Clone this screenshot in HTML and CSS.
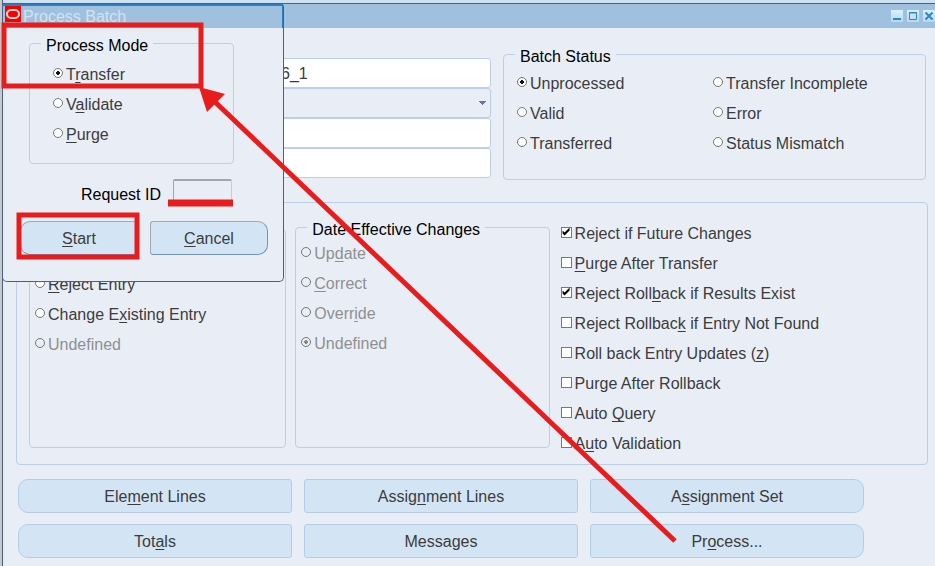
FILE: index.html
```html
<!DOCTYPE html>
<html lang="en">
<head>
    <meta charset="UTF-8">
    <meta name="viewport" content="width=device-width, initial-scale=1.0">
    <title>Process Batch</title>
    <link rel="stylesheet" href="styles.css">
</head>
<body>
    <!-- Batch window -->
    <main class="window">
        <header class="title-bar">
            <button class="window-button" aria-label="Minimize">
                <svg width="12" height="12"><path d="M2 9h8" stroke="#2f86c6" stroke-width="2"/></svg>
            </button>
            <button class="window-button" aria-label="Maximize">
                <svg width="12" height="12"><path d="M2.500 2.500h7v7h-7zM2 3h8" fill="none" stroke="#2f86c6"/></svg>
            </button>
            <button class="window-button" aria-label="Close">
                <svg width="12" height="12"><path d="M2.500 2.500l7 7M9.500 2.500l-7 7" stroke="#2f86c6" stroke-width="2"/></svg>
            </button>
        </header>

        <div class="top-row">
            <div class="fields">
                <input type="text" class="field" value="6_1" aria-label="Batch name">
                <select class="field field-select" aria-label="Batch type"><option></option></select>
                <input type="text" class="field" aria-label="Reference">
                <input type="text" class="field" aria-label="Source">
            </div>

            <fieldset class="group status">
                <legend>Batch Status</legend>
                <div class="status-options">
                    <label class="option"><input type="radio" name="status" checked>Unprocessed</label>
                    <label class="option"><input type="radio" name="status">Transfer Incomplete</label>
                    <label class="option"><input type="radio" name="status">Valid</label>
                    <label class="option"><input type="radio" name="status">Error</label>
                    <label class="option"><input type="radio" name="status">Transferred</label>
                    <label class="option"><input type="radio" name="status">Status Mismatch</label>
                </div>
            </fieldset>
        </div>

        <section class="actions">
            <fieldset class="group existing">
                <label class="option"><input type="radio" name="existing"><span><u>R</u>eject Entry</span></label>
                <label class="option"><input type="radio" name="existing"><span>Change E<u>x</u>isting Entry</span></label>
                <label class="option disabled"><input type="radio" name="existing" disabled>Undefined</label>
            </fieldset>

            <fieldset class="group changes">
                <legend>Date Effective Changes</legend>
                <label class="option disabled"><input type="radio" name="changes" disabled><span>Up<u>d</u>ate</span></label>
                <label class="option disabled"><input type="radio" name="changes" disabled><span><u>C</u>orrect</span></label>
                <label class="option disabled"><input type="radio" name="changes" disabled><span>Overr<u>i</u>de</span></label>
                <label class="option disabled"><input type="radio" name="changes" disabled checked>Undefined</label>
            </fieldset>

            <div class="checks">
                <label class="option"><input type="checkbox" checked>Reject if Future Changes</label>
                <label class="option"><input type="checkbox"><span><u>P</u>urge After Transfer</span></label>
                <label class="option"><input type="checkbox" checked><span>Reject Roll<u>b</u>ack if Results Exist</span></label>
                <label class="option"><input type="checkbox"><span>Reject Rollbac<u>k</u> if Entry Not Found</span></label>
                <label class="option"><input type="checkbox"><span>Roll back Entry Updates (<u>z</u>)</span></label>
                <label class="option"><input type="checkbox">Purge After Rollback</label>
                <label class="option"><input type="checkbox"><span>Auto <u>Q</u>uery</span></label>
                <label class="option"><input type="checkbox"><span>A<u>u</u>to Validation</span></label>
            </div>
        </section>

        <nav class="button-grid">
            <button class="button first">Ele<u>m</u>ent Lines</button>
            <button class="button">Assig<u>n</u>ment Lines</button>
            <button class="button last">A<u>s</u>signment Set</button>
            <button class="button first">Tot<u>a</u>ls</button>
            <button class="button">Messages</button>
            <button class="button last">Pr<u>o</u>cess...</button>
        </nav>
    </main>

    <!-- Process dialog -->
    <div class="dialog" role="dialog" aria-labelledby="dialogTitle">
        <div class="dialog-title">
            <svg class="logo" width="16" height="16">
                <rect width="16" height="16" fill="#f80000"/>
                <rect x="2" y="4" width="12" height="8" rx="4" fill="none" stroke="#ffd9d4" stroke-width="2"/>
            </svg>
            <span id="dialogTitle">Process Batch</span>
        </div>
        <fieldset class="group mode">
            <legend>Process Mode</legend>
            <label class="option"><input type="radio" name="mode" checked><span>T<u>r</u>ansfer</span></label>
            <label class="option"><input type="radio" name="mode"><span>V<u>a</u>lidate</span></label>
            <label class="option"><input type="radio" name="mode"><span><u>P</u>urge</span></label>
        </fieldset>
        <div class="request">
            <label for="requestId">Request ID</label>
            <input type="text" id="requestId" readonly>
        </div>
        <div class="dialog-buttons">
            <button class="button first"><u>S</u>tart</button>
            <button class="button last"><u>C</u>ancel</button>
        </div>
    </div>

    <!-- Red markers -->
    <svg class="markers" width="935" height="566" aria-hidden="true">
        <g fill="none" stroke="#e81c1c">
            <rect x="4" y="25" width="197" height="61" stroke-width="5"/>
            <rect x="19" y="215" width="118" height="42" stroke-width="5"/>
            <path d="M168 203h65" stroke-width="7"/>
            <path d="M213 100L675 541" stroke-width="5"/>
        </g>
        <path d="M199 87L225 94L207 112z" fill="#e81c1c"/>
    </svg>
</body>
</html>
```

FILE: styles.css
```css
* {
    margin: 0;
    padding: 0;
    box-sizing: border-box;
}

body {
    min-height: 100vh;
    background: #e9eef6;
    color: #3c3c3c;
    font-family: "Liberation Sans", Arial, sans-serif;
    font-size: 16px;
    line-height: 18px;
    overflow: hidden;
}

button,
input,
select {
    font: inherit;
    color: inherit;
}

u {
    text-underline-offset: 2px;
    text-decoration-skip-ink: none;
    text-decoration-thickness: 1px;
}

/* Batch window */
.window {
    min-height: 100vh;
    border-left: 1px solid #45618a;
    box-shadow: -2px 0 #c9c9c9;
    margin-left: 2px;
}

.title-bar {
    height: 28px;
    display: flex;
    justify-content: flex-end;
    gap: 4px;
    padding-top: 7px;
    border-top: 3px solid #cfe2f3;
    background: #9fc1df;
    box-shadow: inset 0 1px #45618a;
}

.window-button {
    width: 12px;
    height: 12px;
    border: none;
    background: linear-gradient(#d9f0fc, #b5d9f0);
}

.window-button svg {
    display: block;
}

.top-row {
    display: grid;
    grid-template-columns: 475fr 423fr;
    gap: 12px;
    padding: 14px 9px 0 13px;
}

.fields {
    display: flex;
    flex-direction: column;
    padding: 16px 0 0 261px;
}

.field {
    width: 100%;
    height: 30px;
    padding: 2px 3px 0;
    border: 1px solid #bccfe6;
    border-radius: 3px;
    background: #fff;
}

.field-select {
    appearance: none;
    background-color: #e9eef6;
    background-image: linear-gradient(to bottom left, #6d7390 50%, transparent 50%), linear-gradient(to bottom right, #6d7390 50%, transparent 50%);
    background-size: 4px 4px;
    background-position: right 7px center, right 3px center;
    background-repeat: no-repeat;
}

/* Groups */
.group {
    min-width: 0;
    border: 1px solid #bccfe6;
    border-radius: 4px;
}

.group legend {
    margin-left: 11px;
    padding: 6px 5px 0;
    color: #000;
}

.option {
    display: flex;
    align-items: center;
    height: 30px;
    white-space: nowrap;
}

.option input {
    appearance: none;
    flex: none;
    width: 10px;
    height: 10px;
    margin: 0 3px 4px 0;
    border: 1px solid #777;
    border-radius: 50%;
    background: #fff;
}

.option input[type="radio"]:checked {
    background: #fff radial-gradient(circle, #111 2px, transparent 2px);
}

.option input[type="checkbox"] {
    width: 11px;
    height: 11px;
    border-radius: 0;
}

.option input[type="checkbox"]:checked::before {
    content: "";
    display: block;
    width: 9px;
    height: 9px;
    background: #000;
    clip-path: polygon(1px 3px, 3px 5px, 8px 0, 8px 3px, 3px 8px, 1px 6px);
}

.disabled {
    color: #909090;
}

.option input:disabled {
    background: #e9eef6;
}

.option input[type="radio"]:disabled:checked {
    background: #e9eef6 radial-gradient(circle, #888 2px, transparent 2px);
}

.status-options {
    display: grid;
    grid-template-columns: 197fr 213fr;
    padding: 3px 0 20px 13px;
}

/* Batch actions */
.actions {
    display: grid;
    grid-template-columns: 257fr 254fr 368fr;
    gap: 9px;
    margin: 22px 7px 0 13px;
    padding: 12px 0 5px 12px;
    border: 1px solid #bccfe6;
    border-radius: 4px;
}

.existing,
.changes {
    margin-bottom: 11px;
    padding-left: 5px;
}

.existing {
    margin-top: 14px;
    padding-top: 40px;
}

.changes legend {
    margin-left: 6px;
}

.checks {
    padding: 4px 0 0 2px;
}

/* Buttons */
.button-grid {
    display: grid;
    grid-template-columns: repeat(3, 1fr);
    gap: 11px 12px;
    padding: 14px 71px 8px 15px;
}

.button {
    height: 34px;
    padding-top: 2px;
    border: 1px solid #b5cce6;
    border-radius: 3px;
    background: #d3e4f4;
}

.button.first {
    border-radius: 10px 3px 3px 10px;
}

.button.last {
    border-radius: 3px 10px 10px 3px;
}

/* Process dialog */
.dialog {
    position: absolute;
    top: 4px;
    left: 2px;
    width: 282px;
    padding-bottom: 26px;
    border: 1px solid #45618a;
    border-top: none;
    border-radius: 3px 3px 5px 5px;
    background: #e9eef6;
}

.dialog-title {
    display: flex;
    height: 24px;
    gap: 2px;
    padding-left: 2px;
    border-top: 2px solid #2f7fc0;
    border-right: 1px solid #2f7fc0;
    background: #9fc1df;
    color: #d0e3f3;
    line-height: 22px;
}

.mode {
    width: 205px;
    margin: 3px 0 0 26px;
    padding-bottom: 13px;
}

.mode .option {
    padding-left: 23px;
}

.mode legend + .option {
    margin-top: 5px;
}

.request {
    display: flex;
    align-items: flex-end;
    gap: 12px;
    margin: 15px 51px 0 0;
    justify-content: flex-end;
    color: #000;
}

.request label {
    padding-bottom: 2px;
}

.request input {
    width: 59px;
    height: 27px;
    border: 1px solid #bccfe6;
    border-top: 2px solid #9aa7b5;
    border-left-color: #9aa7b5;
    border-radius: 2px;
    background: #e9eef6;
}

.dialog-buttons {
    display: flex;
    gap: 12px;
    margin: 15px 15px 0 17px;
}

.dialog-buttons .button {
    flex: 1;
    border-color: #a3a9b0 #6f93bd #6f93bd #a3a9b0;
}

.markers {
    position: absolute;
    top: 0;
    left: 0;
    pointer-events: none;
}
```
